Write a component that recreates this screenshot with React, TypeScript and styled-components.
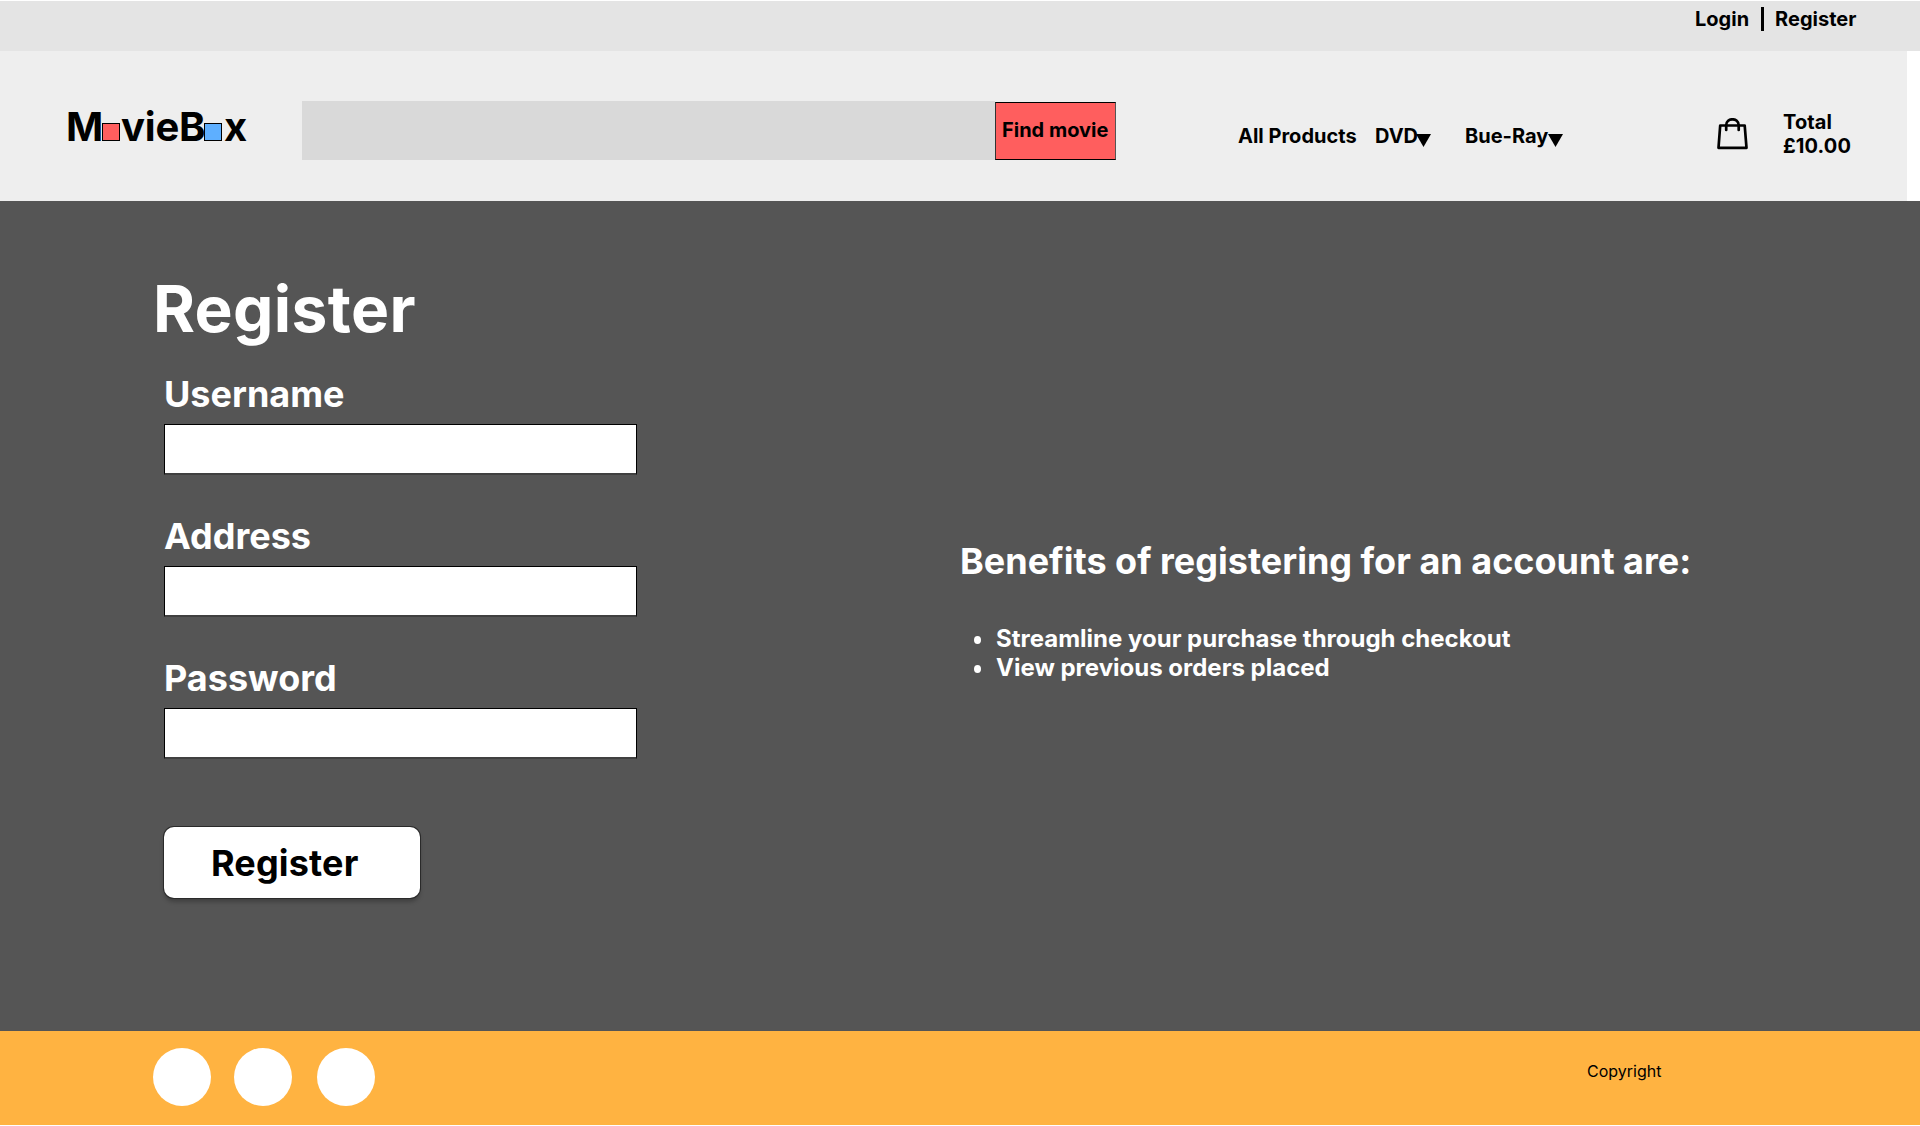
import React from 'react';
import styled, { createGlobalStyle } from 'styled-components';

const GlobalStyle = createGlobalStyle`
  *, *::before, *::after { box-sizing: border-box; }
  body { margin: 0; background: #fff; color: #000; font-family: Inter, sans-serif; }
  h1, h2, p, ul { margin: 0; padding: 0; }
  a { color: inherit; text-decoration: none; }
  button { font-family: inherit; color: #000; }
`;

const Page = styled.div`
  display: flex;
  flex-direction: column;
  width: 1920px;
  height: 1126px;
  padding: 1px 0;
  overflow: hidden;
`;

const TopBar = styled.div`
  display: flex;
  align-items: flex-start;
  height: 50px;
  padding: 6px 0 0 1695px;
  background: #e4e4e4;
  font-size: 20px;
  line-height: 24px;
  font-weight: 700;
`;

const TopLink = styled.a`
  white-space: nowrap;
`;

const Divider = styled.span`
  width: 3px;
  height: 24px;
  margin: 0 11px 0 12px;
  background: #000;
`;

const Header = styled.header`
  display: flex;
  align-items: flex-start;
  width: 1907px;
  height: 150px;
  background: #eeeeee;
  font-size: 20px;
  line-height: 24px;
  font-weight: 700;
`;

const Logo = styled.div`
  display: flex;
  width: 302px;
  padding: 52px 0 0 66px;
  font-size: 40px;
  line-height: 48px;
  letter-spacing: -0.2px;
  white-space: nowrap;
`;

const LogoPart = styled.span<{ $width: number }>`
  width: ${(p) => p.$width}px;
`;

const LogoSquare = styled.span<{ $color: string; $gap: number }>`
  flex: none;
  width: 18px;
  height: 18px;
  margin: 20px ${(p) => p.$gap}px 0 0;
  border: 1px solid #000;
  background: ${(p) => p.$color};
`;

const Search = styled.div`
  display: flex;
  align-items: flex-end;
  width: 814px;
  padding-top: 50px;
`;

const SearchField = styled.div`
  width: 693px;
  height: 59px;
  background: #d9d9d9;
`;

const FindButton = styled.button`
  width: 121px;
  height: 58px;
  padding: 0 0 2px 6px;
  border: 1px solid #000;
  border-right-color: #555;
  border-left-color: #333;
  background: #ff5e5e;
  font-size: 20px;
  line-height: 24px;
  font-weight: 700;
  text-align: left;
  white-space: nowrap;
`;

const Nav = styled.nav`
  display: flex;
  width: 601px;
  padding: 73px 0 0 122px;
`;

const NavItem = styled.a<{ $width: number }>`
  display: flex;
  width: ${(p) => p.$width}px;
  white-space: nowrap;
`;

const Caret = styled.svg<{ $offset: number }>`
  flex: none;
  width: 15px;
  height: 13px;
  margin: 10px 0 0 ${(p) => p.$offset}px;
`;

const BagIcon = styled.svg`
  flex: none;
  width: 31px;
  height: 32px;
  margin-top: 67px;
`;

const Total = styled.p`
  padding: 59px 0 0 35px;
  letter-spacing: 0.1px;
`;

const Main = styled.main`
  display: flex;
  height: 830px;
  background: #555555;
  color: #fff;
  font-weight: 700;
`;

const FormColumn = styled.section`
  width: 960px;
  padding: 69px 0 0 153px;
`;

const Title = styled.h1`
  font-size: 64px;
  line-height: 77px;
  letter-spacing: 0.35px;
`;

const Form = styled.form`
  display: flex;
  flex-direction: column;
  gap: 39px;
  padding: 25px 0 0 11px;
`;

const Field = styled.label`
  display: flex;
  flex-direction: column;
  gap: 8px;
  font-size: 36px;
  line-height: 44px;
`;

const Input = styled.input`
  width: 473px;
  height: 51px;
  padding: 0 12px;
  border: 1px solid #000;
  border-bottom: 2px solid #404040;
  border-radius: 0;
  background: #fff;
  outline: none;
`;

const RegisterButton = styled.button`
  width: 256px;
  height: 71px;
  margin-top: 29px;
  padding: 0 0 0 47px;
  border: 0;
  border-radius: 10px;
  background: #fff;
  box-shadow: 0 0 0 1px #2a2a2a, 0 4px 4px rgba(0, 0, 0, 0.25);
  font-size: 36px;
  line-height: 44px;
  letter-spacing: 0.15px;
  font-weight: 700;
  text-align: left;
`;

const Benefits = styled.section`
  padding: 338px 0 0;
`;

const BenefitsTitle = styled.h2`
  font-size: 36px;
  line-height: 44px;
  white-space: nowrap;
`;

const BenefitList = styled.ul`
  padding: 41px 0 0 14px;
  list-style: none;
  font-size: 24px;
  line-height: 29px;
`;

const BenefitItem = styled.li`
  display: flex;
  align-items: center;
  gap: 15px;
  &::before {
    content: '';
    width: 7px;
    height: 8px;
    margin-top: 2px;
    border-radius: 50%;
    background: #fff;
  }
`;

const Footer = styled.footer`
  display: flex;
  align-items: flex-start;
  height: 94px;
  padding: 17px 0 0 153px;
  background: #ffb341;
`;

const SocialCircle = styled.a<{ $gap: number }>`
  width: 58px;
  height: 58px;
  margin-right: ${(p) => p.$gap}px;
  border-radius: 50%;
  background: #fff;
`;

const Copyright = styled.p`
  padding: 14px 0 0 1212px;
  font-size: 16px;
  line-height: 19px;
`;

const DownCaret = ({ offset }: { offset: number }) => (
  <Caret $offset={offset} viewBox="0 0 15 13">
    <path d="M0 0H15L7.5 13Z" />
  </Caret>
);

export default function App() {
  return (
    <Page>
      <GlobalStyle />
      <TopBar>
        <TopLink>Login</TopLink>
        <Divider />
        <TopLink>Register</TopLink>
      </TopBar>
      <Header>
        <Logo>
          <LogoPart $width={36}>M</LogoPart>
          <LogoSquare $color="#ff5e5e" $gap={1} />
          <LogoPart $width={83}>vieB</LogoPart>
          <LogoSquare $color="#5eafff" $gap={2} />
          <LogoPart $width={24}>x</LogoPart>
        </Logo>
        <Search>
          <SearchField />
          <FindButton>Find movie</FindButton>
        </Search>
        <Nav>
          <NavItem $width={137}>All Products</NavItem>
          <NavItem $width={90}>
            DVD
            <DownCaret offset={-2} />
          </NavItem>
          <NavItem $width={100}>
            Bue-Ray
            <DownCaret offset={0} />
          </NavItem>
        </Nav>
        <BagIcon
          viewBox="0 0 31 32"
          fill="none"
          stroke="#000"
          strokeWidth="2.7"
          strokeLinejoin="round"
          strokeLinecap="round"
        >
          <path d="M3.2 7.5H27.7L29.5 29.8H1.5Z" />
          <path d="M9.2 12V7.2C9.2 -0.7 21.7 -0.7 21.7 7.2V12" />
        </BagIcon>
        <Total>
          Total
          <br />
          £10.00
        </Total>
      </Header>
      <Main>
        <FormColumn>
          <Title>Register</Title>
          <Form>
            <Field>
              Username
              <Input type="text" />
            </Field>
            <Field>
              Address
              <Input type="text" />
            </Field>
            <Field>
              Password
              <Input type="password" />
            </Field>
            <RegisterButton type="button">Register</RegisterButton>
          </Form>
        </FormColumn>
        <Benefits>
          <BenefitsTitle>Benefits of registering for an account are:</BenefitsTitle>
          <BenefitList>
            <BenefitItem>Streamline your purchase through checkout</BenefitItem>
            <BenefitItem>View previous orders placed</BenefitItem>
          </BenefitList>
        </Benefits>
      </Main>
      <Footer>
        <SocialCircle $gap={23} />
        <SocialCircle $gap={25} />
        <SocialCircle $gap={0} />
        <Copyright>Copyright</Copyright>
      </Footer>
    </Page>
  );
}
